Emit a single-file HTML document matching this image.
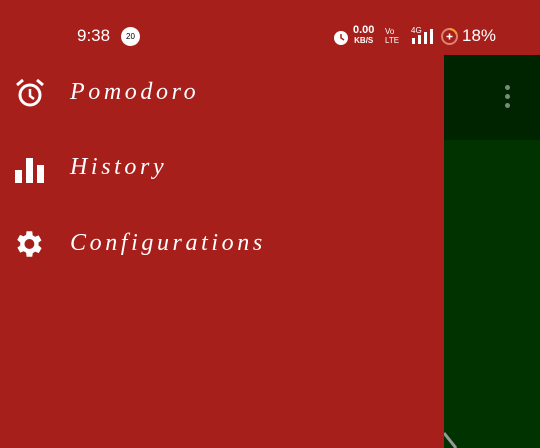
<!DOCTYPE html>
<html><head><style>
body{margin:0;width:540px;height:448px;overflow:hidden;background:#a61f1b;position:relative;font-family:"Liberation Sans",sans-serif;color:#fff}
.g{position:absolute;left:444px;top:55px;width:96px;height:393px;background:#013301}
.tb{position:absolute;left:444px;top:55px;width:96px;height:85px;background:#002400}
.dot{position:absolute;left:505px;width:5px;height:5px;border-radius:50%;background:#7a8a7a}
.it{position:absolute;left:70px;font-size:24px;letter-spacing:3.6px;font-style:italic;font-family:"Liberation Serif",serif}
.sb{position:absolute;top:26px;font-size:17px}
</style></head><body>
<div class="g"></div><div class="tb"></div>
<div class="dot" style="top:85px"></div><div class="dot" style="top:94px"></div><div class="dot" style="top:103px"></div>
<svg style="position:absolute;left:444px;top:428px" width="20" height="20"><line x1="0" y1="5" x2="12" y2="20" stroke="#999" stroke-width="3"/></svg>
<div class="sb" style="left:77px">9:38</div>
<div style="position:absolute;left:121px;top:27px;width:19px;height:19px;border-radius:50%;background:#fff;color:#000;font-size:8px;text-align:center;line-height:19px">20</div>
<svg style="position:absolute;left:332px;top:28px" width="18" height="18"><circle cx="9" cy="10" r="7" fill="#fff"/><path d="M9 6v4l3 2" stroke="#a61f1b" stroke-width="1.5" fill="none"/></svg>
<div style="position:absolute;left:353px;top:25px;font-size:11px;font-weight:bold;line-height:10px;text-align:center">0.00<br><span style="font-size:8px">KB/S</span></div>
<div style="position:absolute;left:385px;top:27px;font-size:8px;line-height:9px">Vo<br>LTE</div>
<div style="position:absolute;left:411px;top:26px;font-size:8px">4G</div>
<svg style="position:absolute;left:411px;top:28px" width="24" height="18"><rect x="1" y="10" width="3" height="6" fill="#fff"/><rect x="7" y="7" width="3" height="9" fill="#fff"/><rect x="13" y="4" width="3" height="12" fill="#fff"/><rect x="19" y="1" width="3" height="15" fill="#fff"/></svg>
<svg style="position:absolute;left:440px;top:27px" width="19" height="19"><circle cx="9.5" cy="9.5" r="7.5" fill="none" stroke="#e08070" stroke-width="2"/><path d="M9.5 2a7.5 7.5 0 0 1 7 5" stroke="#f0a030" stroke-width="2" fill="none"/><path d="M9.5 6.5v6M6.5 9.5h6" stroke="#fff" stroke-width="1.5"/></svg>
<div class="sb" style="left:462px">18%</div>
<svg style="position:absolute;left:14px;top:78px" width="32" height="32" viewBox="0 0 32 32"><circle cx="16" cy="17" r="10" fill="none" stroke="#fff" stroke-width="3"/><path d="M16 11v7l4 3" stroke="#fff" stroke-width="2.5" fill="none"/><path d="M3 7l6-5M29 7l-6-5" stroke="#fff" stroke-width="3"/></svg>
<div class="it" style="top:79px">Pomodoro</div>
<svg style="position:absolute;left:14px;top:155px" width="32" height="30"><rect x="1" y="15" width="7" height="13" fill="#fff"/><rect x="12" y="3" width="7" height="25" fill="#fff"/><rect x="23" y="10" width="7" height="18" fill="#fff"/></svg>
<div class="it" style="top:154px">History</div>
<svg style="position:absolute;left:11px;top:227px" width="34" height="34" viewBox="0 0 24 24"><path fill="#fff" d="M19.4 13a7.5 7.5 0 0 0 0-2l2.1-1.6-2-3.5-2.5 1a7.3 7.3 0 0 0-1.7-1L15 3h-4l-.4 2.6a7.3 7.3 0 0 0-1.7 1l-2.5-1-2 3.5L6.6 11a7.5 7.5 0 0 0 0 2l-2.1 1.6 2 3.5 2.5-1a7.3 7.3 0 0 0 1.7 1L11 21h4l.4-2.6a7.3 7.3 0 0 0 1.7-1l2.5 1 2-3.5zM13 15.5a3.5 3.5 0 1 1 0-7 3.5 3.5 0 0 1 0 7z"/></svg>
<div class="it" style="top:230px">Configurations</div>
</body></html>
